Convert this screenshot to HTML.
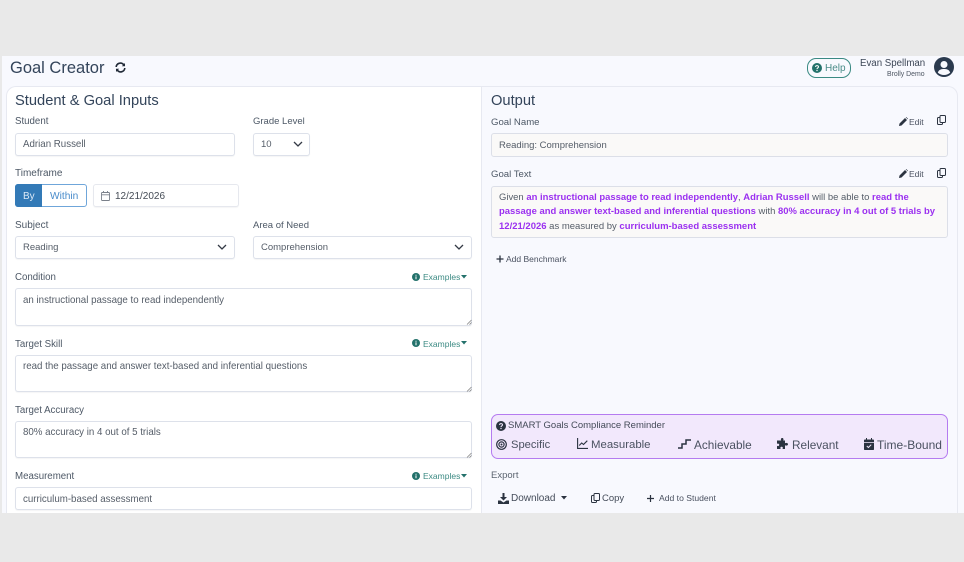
<!DOCTYPE html>
<html lang="en">
<head>
<meta charset="utf-8">
<title>Goal Creator</title>
<style>
html,body{margin:0;padding:0;width:964px;height:562px;overflow:hidden;background:#e9e9e9;font-family:"Liberation Sans",sans-serif;}
#app{position:absolute;left:0;top:0;width:964px;height:562px;overflow:hidden;filter:blur(.3px);}
.abs{position:absolute;box-sizing:border-box;}
.t{position:absolute;white-space:nowrap;line-height:14px;height:14px;color:#4b5563;font-size:10px;}
.lab{font-size:9.7px;color:#4d5866;}
.val{font-size:9.5px;color:#555d68;}
.long{font-size:9.72px;}
.h{font-size:14.7px;color:#33445a;line-height:20px;height:20px;}
.field{position:absolute;box-sizing:border-box;background:#fff;border:1px solid #dde1ea;border-radius:3px;box-shadow:0 1px 1px rgba(40,50,80,.05);}
.ex{font-size:8.5px;color:#3d8b84;}
.ro{position:absolute;box-sizing:border-box;background:#faf9f8;border:1px solid #dcdfe8;border-radius:3px;}
.p{color:#9b30f0;font-weight:700;}
.sm{font-size:11.8px;color:#4a5160;}
svg{position:absolute;overflow:visible;}
</style>
</head>
<body>
<div id="app">
  <div class="abs" style="left:2px;top:56px;width:962px;height:457px;background:#f8f9fe;"></div>
  <div class="abs" style="left:6px;top:86px;width:476px;height:427px;background:#fff;border:1px solid #e7e9f1;border-bottom:0;border-right:0;border-top-left-radius:10px;"></div>
  <div class="abs" style="left:481px;top:86px;width:477px;height:427px;background:#f8f9fe;border:1px solid #e7e9f1;border-bottom:0;border-top-right-radius:10px;"></div>

  <!-- Header -->
  <div class="t" style="left:10px;top:58px;height:20px;line-height:20px;font-size:16.5px;color:#33445a;">Goal Creator</div>
  <svg style="left:115px;top:62px" width="11" height="11" viewBox="0 0 11 11" fill="none" stroke="#222b38" stroke-width="1.6"><path d="M1.2 5A4.2 4.2 0 0 1 8.6 2.6L9.6 3.6M9.8 6A4.2 4.2 0 0 1 2.4 8.4L1.4 7.4"/><path d="M10 1v3.2H6.8z M1 10V6.8h3.2z" fill="#222b38" stroke="none"/></svg>

  <div class="abs" style="left:807px;top:58px;width:44px;height:20px;border:1px solid #3a8a83;border-radius:9px;background:#f8f9fe;"></div>
  <svg style="left:812px;top:63px" width="10" height="10" viewBox="0 0 10 10"><circle cx="5" cy="5" r="5" fill="#23716b"/><path d="M3.5 3.9C3.6 2.2 6.5 2.2 6.5 3.9 6.5 5 5 4.9 5 6" fill="none" stroke="#fff" stroke-width="1.1"/><circle cx="5" cy="7.5" r=".7" fill="#fff"/></svg>
  <div class="t" style="left:825px;top:62px;font-size:10px;color:#4a8c88;">Help</div>
  <div class="t" style="left:860px;top:57px;font-size:9.7px;color:#3c4656;">Evan Spellman</div>
  <div class="t" style="left:887px;top:68px;font-size:6.9px;color:#4c5562;">Brolly Demo</div>
  <svg style="left:934px;top:57px" width="20" height="20" viewBox="0 0 20 20"><circle cx="10" cy="10" r="10" fill="#2b3a4e"/><circle cx="10" cy="7.5" r="3.5" fill="#f8f9fe"/><path d="M3.8 15.6C5 12.4 7.5 12 10 12s5 .4 6.2 3.6C14.6 17.2 12.4 18 10 18s-4.6-.8-6.2-2.4z" fill="#f8f9fe"/></svg>

  <!-- Left column -->
  <div class="t h" style="left:15px;top:91px;">Student &amp; Goal Inputs</div>

  <div class="t lab" style="left:15px;top:115px;">Student</div>
  <div class="field" style="left:15px;top:133px;width:220px;height:23px;"></div>
  <div class="t val long" style="left:23px;top:138px;">Adrian Russell</div>

  <div class="t lab" style="left:253px;top:115px;font-size:9.5px;">Grade Level</div>
  <div class="field" style="left:253px;top:133px;width:57px;height:23px;"></div>
  <div class="t val" style="left:261px;top:138px;">10</div>
  <svg style="left:293px;top:141px" width="10" height="7" viewBox="0 0 10 7" fill="none" stroke="#343a45" stroke-width="1.3"><path d="M1 1l4 4 4-4"/></svg>

  <div class="t lab" style="left:15px;top:167px;font-size:10px;">Timeframe</div>
  <div class="abs" style="left:15px;top:184px;width:72px;height:23px;border:1px solid #6fa6da;border-radius:3px;background:#fff;"></div>
  <div class="abs" style="left:15px;top:184px;width:27px;height:23px;background:#337ab7;border-radius:3px 0 0 3px;"></div>
  <div class="t" style="left:23px;top:190px;font-size:10px;color:#dce9f6;">By</div>
  <div class="t" style="left:50px;top:190px;font-size:10.2px;color:#4a8ccb;">Within</div>
  <div class="field" style="left:93px;top:184px;width:146px;height:23px;border-color:#e6e8ee;"></div>
  <svg style="left:101px;top:191px" width="9" height="10" viewBox="0 0 9 10" fill="none" stroke="#7a808a" stroke-width=".9"><rect x=".5" y="1.5" width="8" height="8" rx=".8"/><path d="M.5 3.8h8M2.5 0v2M6.500 0v2"/></svg>
  <div class="t" style="left:115px;top:190px;font-size:10px;color:#444b55;">12/21/2026</div>

  <div class="t lab" style="left:15px;top:219px;font-size:10px;">Subject</div>
  <div class="field" style="left:15px;top:236px;width:220px;height:23px;"></div>
  <div class="t val" style="left:23px;top:241px;">Reading</div>
  <svg style="left:217px;top:244px" width="10" height="7" viewBox="0 0 10 7" fill="none" stroke="#343a45" stroke-width="1.3"><path d="M1 1l4 4 4-4"/></svg>

  <div class="t lab" style="left:253px;top:219px;font-size:9.5px;">Area of Need</div>
  <div class="field" style="left:253px;top:236px;width:219px;height:23px;"></div>
  <div class="t val" style="left:261px;top:241px;">Comprehension</div>
  <svg style="left:454px;top:244px" width="10" height="7" viewBox="0 0 10 7" fill="none" stroke="#343a45" stroke-width="1.3"><path d="M1 1l4 4 4-4"/></svg>

  <div class="t lab" style="left:15px;top:271px;">Condition</div>
  <svg style="left:412px;top:273px" width="8" height="8" viewBox="0 0 8 8"><circle cx="4" cy="4" r="4" fill="#23716b"/><path d="M3.5 3.4h1v2.8h-1zM3.5 1.7h1v1h-1z" fill="#fff"/></svg>
  <div class="t ex" style="left:423px;top:270px;">Examples</div>
  <svg style="left:461px;top:275px" width="6" height="4" viewBox="0 0 6 4"><path d="M0 0h6L3 3.5z" fill="#23716b"/></svg>
  <div class="field" style="left:15px;top:288px;width:457px;height:38px;"></div>
  <div class="t val long" style="left:23px;top:294px;">an instructional passage to read independently</div>
  <svg style="left:466px;top:319px" width="6" height="6" viewBox="0 0 6 6" stroke="#777" stroke-width=".7"><path d="M1 5.500L5.500 1M3.500 5.500L5.500 3.500"/></svg>

  <div class="t lab" style="left:15px;top:338px;">Target Skill</div>
  <svg style="left:412px;top:339px" width="8" height="8" viewBox="0 0 8 8"><circle cx="4" cy="4" r="4" fill="#23716b"/><path d="M3.5 3.4h1v2.8h-1zM3.5 1.7h1v1h-1z" fill="#fff"/></svg>
  <div class="t ex" style="left:423px;top:337px;">Examples</div>
  <svg style="left:461px;top:341px" width="6" height="4" viewBox="0 0 6 4"><path d="M0 0h6L3 3.5z" fill="#23716b"/></svg>
  <div class="field" style="left:15px;top:355px;width:457px;height:37px;"></div>
  <div class="t val long" style="left:23px;top:360px;">read the passage and answer text-based and inferential questions</div>
  <svg style="left:466px;top:386px" width="6" height="6" viewBox="0 0 6 6" stroke="#777" stroke-width=".7"><path d="M1 5.500L5.500 1M3.500 5.500L5.500 3.500"/></svg>

  <div class="t lab" style="left:15px;top:404px;">Target Accuracy</div>
  <div class="field" style="left:15px;top:421px;width:457px;height:37px;"></div>
  <div class="t val long" style="left:23px;top:426px;">80% accuracy in 4 out of 5 trials</div>
  <svg style="left:466px;top:452px" width="6" height="6" viewBox="0 0 6 6" stroke="#777" stroke-width=".7"><path d="M1 5.500L5.500 1M3.500 5.500L5.500 3.500"/></svg>

  <div class="t lab" style="left:15px;top:470px;">Measurement</div>
  <svg style="left:412px;top:472px" width="8" height="8" viewBox="0 0 8 8"><circle cx="4" cy="4" r="4" fill="#23716b"/><path d="M3.5 3.4h1v2.800h-1zM3.500 1.700h1v1h-1z" fill="#fff"/></svg>
  <div class="t ex" style="left:423px;top:469px;">Examples</div>
  <svg style="left:461px;top:474px" width="6" height="4" viewBox="0 0 6 4"><path d="M0 0h6L3 3.500z" fill="#23716b"/></svg>
  <div class="field" style="left:15px;top:487px;width:457px;height:23px;"></div>
  <div class="t val long" style="left:23px;top:493px;">curriculum-based assessment</div>

  <!-- Right column -->
  <div class="t h" style="left:491px;top:91px;">Output</div>

  <div class="t lab" style="left:491px;top:116px;font-size:9.6px;">Goal Name</div>
  <svg style="left:899px;top:117px" width="9" height="9" viewBox="0 0 9 9"><path d="M0 9l.5-2.500L6 1l2 2-5.500 5.500zM6.700.3l.5-.3 1.800 1.800-.3.500z" fill="#2b3340"/></svg>
  <div class="t" style="left:909px;top:115px;font-size:8.5px;color:#4a5160;">Edit</div>
  <svg style="left:937px;top:115px" width="9" height="10" viewBox="0 0 9 10" fill="none" stroke="#2b3340" stroke-width="1"><rect x="3" y=".5" width="5.500" height="7" rx="1"/><path d="M3 2.500H1.500a1 1 0 0 0-1 1v5a1 1 0 0 0 1 1h3a1 1 0 0 0 1-1V8"/></svg>
  <div class="ro" style="left:491px;top:133px;width:457px;height:24px;"></div>
  <div class="t val" style="left:499px;top:139px;">Reading: Comprehension</div>

  <div class="t lab" style="left:491px;top:168px;font-size:9.6px;">Goal Text</div>
  <svg style="left:899px;top:169px" width="9" height="9" viewBox="0 0 9 9"><path d="M0 9l.5-2.500L6 1l2 2-5.500 5.500zM6.700.3l.5-.3 1.800 1.800-.3.500z" fill="#2b3340"/></svg>
  <div class="t" style="left:909px;top:167px;font-size:8.5px;color:#4a5160;">Edit</div>
  <svg style="left:937px;top:168px" width="9" height="10" viewBox="0 0 9 10" fill="none" stroke="#2b3340" stroke-width="1"><rect x="3" y=".5" width="5.500" height="7" rx="1"/><path d="M3 2.500H1.500a1 1 0 0 0-1 1v5a1 1 0 0 0 1 1h3a1 1 0 0 0 1-1V8"/></svg>
  <div class="ro" style="left:491px;top:186px;width:457px;height:52px;"></div>
  <div class="t val" style="left:499px;top:191px;font-size:9.46px;">Given <span class="p">an instructional passage to read independently</span>, <span class="p">Adrian Russell</span> will be able to <span class="p">read the</span></div>
  <div class="t val" style="left:499px;top:205px;font-size:9.46px;"><span class="p">passage and answer text-based and inferential questions</span> with <span class="p">80% accuracy in 4 out of 5 trials by</span></div>
  <div class="t val" style="left:499px;top:220px;"><span class="p">12/21/2026</span> as measured by <span class="p">curriculum-based assessment</span></div>

  <svg style="left:496px;top:255px" width="8" height="8" viewBox="0 0 8 8" stroke="#2b3340" stroke-width="1.300"><path d="M4 .5v7M.5 4h7"/></svg>
  <div class="t" style="left:506px;top:252px;font-size:8.500px;color:#4a5160;">Add Benchmark</div>

  <div class="abs" style="left:491px;top:414px;width:457px;height:45px;background:#f2e8fc;border:1px solid #b57bf0;border-radius:7px;"></div>
  <svg style="left:496px;top:421px" width="10" height="10" viewBox="0 0 10 10"><circle cx="5" cy="5" r="5" fill="#2b3340"/><path d="M3.500 3.900C3.600 2.200 6.500 2.200 6.500 3.900 6.500 5 5 4.900 5 6" fill="none" stroke="#f2e8fc" stroke-width="1.100"/><circle cx="5" cy="7.500" r=".7" fill="#f2e8fc"/></svg>
  <div class="t" style="left:508px;top:419px;font-size:9.500px;color:#444b58;">SMART Goals Compliance Reminder</div>

  <svg style="left:496px;top:439px" width="11" height="11" viewBox="0 0 11 11" fill="none" stroke="#2b3340"><circle cx="5.500" cy="5.500" r="4.800" stroke-width="1.200"/><circle cx="5.500" cy="5.500" r="2.600" stroke-width="1.200"/><circle cx="5.500" cy="5.500" r="1" fill="#2b3340" stroke="none"/></svg>
  <div class="t sm" style="left:511px;top:438px;font-size:11.2px;">Specific</div>
  <svg style="left:577px;top:438px" width="11" height="11" viewBox="0 0 11 11" fill="none" stroke="#2b3340" stroke-width="1.100"><path d="M.6 0v10.400H11"/><path d="M2.200 7.500l2.500-2.500 1.800 1.500 3.800-3.800"/></svg>
  <div class="t sm" style="left:591px;top:438px;font-size:11.4px;">Measurable</div>
  <svg style="left:678px;top:439px" width="13" height="10" viewBox="0 0 13 10" fill="none" stroke="#2b3340" stroke-width="1.500"><path d="M0 9h4V5h4V1h5"/></svg>
  <div class="t sm" style="left:694px;top:438px;">Achievable</div>
  <svg style="left:777px;top:438px" width="11" height="12" viewBox="0 0 11 12"><path d="M3 2.500h1.200C3.500 1 4.200 0 5.200 0s1.700 1 1 2.500H8v2.700c1.200-.7 3-.4 3 1s-1.800 1.700-3 1V11H5.500c.7-1.300.2-2.200-.9-2.200s-1.600.9-.9 2.200H0V7.800c1.200.6 2.200.2 2.200-1s-1-1.500-2.200-1V2.500z" fill="#2b3340"/></svg>
  <div class="t sm" style="left:792px;top:438px;">Relevant</div>
  <svg style="left:864px;top:438px" width="10" height="12" viewBox="0 0 10 12"><path d="M2 0h1v1.500h4V0h1v1.500h1.200a.8.8 0 0 1 .8.800V4H0V2.300a.8.8 0 0 1 .8-.8H2zM0 4.800h10v6.400a.8.8 0 0 1-.8.800H.8a.8.8 0 0 1-.8-.8z" fill="#2b3340"/><path d="M2.800 8l1.600 1.500 2.800-2.800" fill="none" stroke="#f2e8fc" stroke-width="1"/></svg>
  <div class="t sm" style="left:877px;top:438px;font-size:12px;">Time-Bound</div>

  <div class="t" style="left:491px;top:469px;font-size:9.500px;color:#5b6470;">Export</div>
  <svg style="left:498px;top:493px" width="11" height="11" viewBox="0 0 11 11"><path d="M4.500 0h2v4H9L5.500 7.500 2 4h2.500z" fill="#2b3340"/><path d="M0 7.500h2.500l3 2 3-2H11V11H0z" fill="#2b3340"/></svg>
  <div class="t" style="left:511px;top:492px;font-size:10px;color:#454d5a;">Download</div>
  <svg style="left:561px;top:496px" width="6" height="4" viewBox="0 0 6 4"><path d="M0 0h6L3 3.500z" fill="#2b3340"/></svg>
  <svg style="left:591px;top:493px" width="9" height="10" viewBox="0 0 9 10" fill="none" stroke="#2b3340" stroke-width="1"><rect x="3" y=".5" width="5.500" height="7" rx="1"/><path d="M3 2.500H1.500a1 1 0 0 0-1 1v5a1 1 0 0 0 1 1h3a1 1 0 0 0 1-1V8"/></svg>
  <div class="t" style="left:602px;top:492px;font-size:9.5px;color:#454d5a;">Copy</div>
  <svg style="left:647px;top:495px" width="7" height="7" viewBox="0 0 7 7" stroke="#2b3340" stroke-width="1.200"><path d="M3.500 0v7M0 3.500h7"/></svg>
  <div class="t" style="left:659px;top:491px;font-size:8.600px;color:#4a5160;">Add to Student</div>
</div>
</body>
</html>
